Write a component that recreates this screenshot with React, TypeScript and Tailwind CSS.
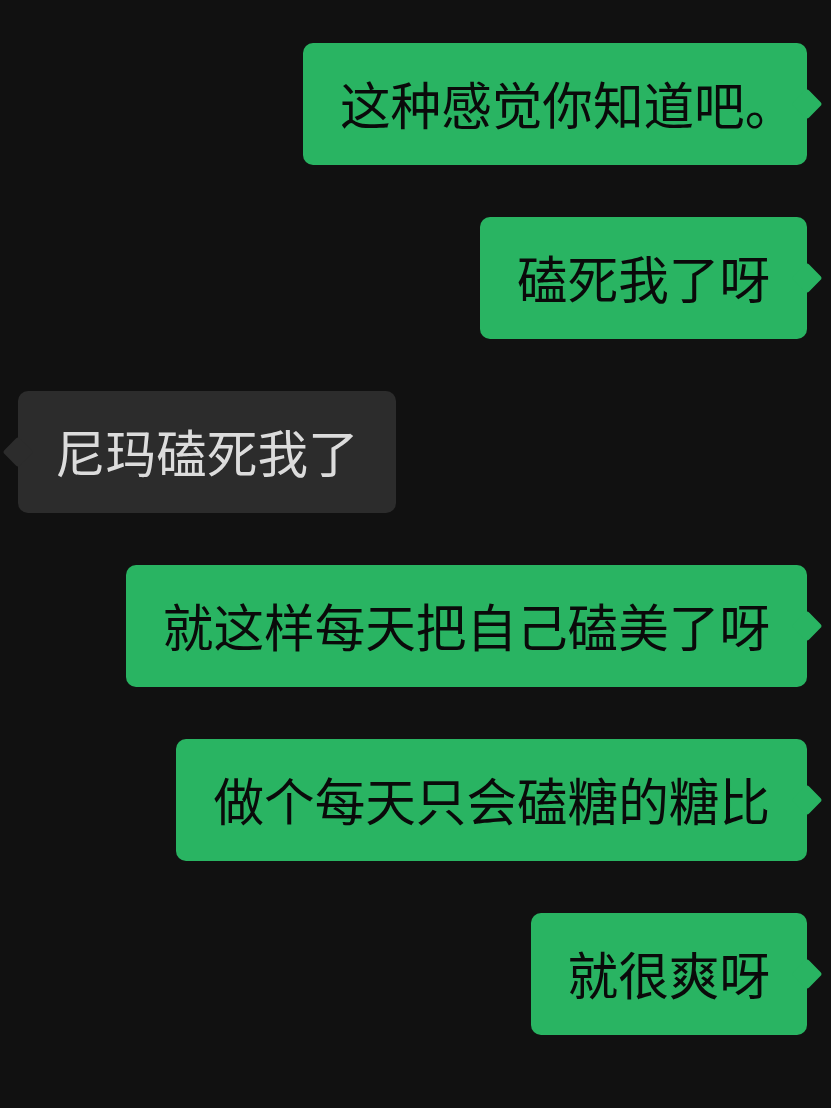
import React from "react";

type Msg = { text: string; me: boolean };

const msgs: Msg[] = [
  { text: "这种感觉你知道吧。", me: true },
  { text: "磕死我了呀", me: true },
  { text: "尼玛磕死我了", me: false },
  { text: "就这样每天把自己磕美了呀", me: true },
  { text: "做个每天只会磕糖的糖比", me: true },
  { text: "就很爽呀", me: true },
];

export default function App() {
  return (
    <div
      className="w-[831px] h-[1108px] bg-[#111111] flex flex-col gap-[52px] pt-[43px] pl-[18px] pr-[24px] overflow-hidden"
      style={{ fontFamily: '"Noto Sans CJK SC", "Noto Sans", sans-serif' }}
    >
      {msgs.map((m, i) => (
        <div key={i} className={m.me ? "flex justify-end" : "flex justify-start"}>
          <div
            className={
              m.me
                ? "relative h-[122px] flex items-center px-[37px] rounded-[10px] bg-[#29b462] text-[#0a0a0a]"
                : "relative h-[122px] flex items-center px-[37px] rounded-[10px] bg-[#2c2c2c] text-[#dcdcdc]"
            }
          >
            {m.me ? (
              <div className="absolute right-[-11px] top-1/2 -translate-y-1/2 w-[22px] h-[22px] rotate-45 rounded-[3px] bg-[#29b462]" />
            ) : (
              <div className="absolute left-[-11px] top-1/2 -translate-y-1/2 w-[22px] h-[22px] rotate-45 rounded-[3px] bg-[#2c2c2c]" />
            )}
            <span className="relative text-[50.6px] leading-none whitespace-nowrap -translate-y-[1px] [font-feature-settings:'halt']">
              {m.text}
            </span>
          </div>
        </div>
      ))}
    </div>
  );
}
